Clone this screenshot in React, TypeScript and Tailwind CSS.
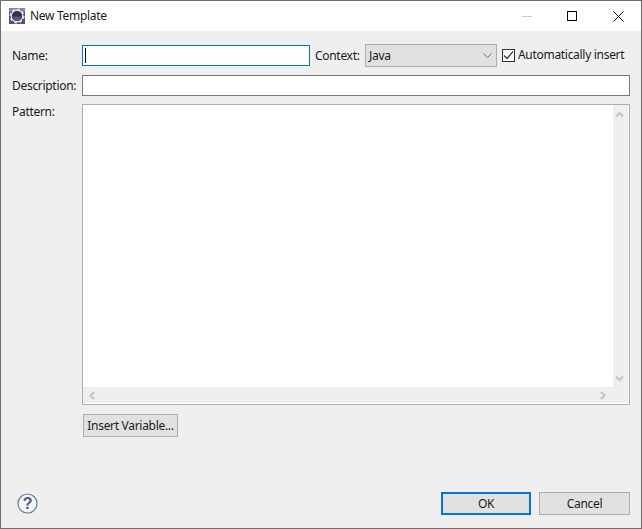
const ff = "font-['Noto_Sans','Open_Sans',sans-serif]";

function AppIcon() {
  return (
    <svg width="16" height="16" viewBox="0 0 16 16">
      <rect x="0" y="0" width="16" height="16" fill="#5a4888" />
      <rect x="0" y="0" width="16" height="4" fill="#8d80ad" />
      <circle cx="8" cy="8" r="6.6" fill="none" stroke="#dcdce4" strokeWidth="1.8" strokeDasharray="2.6 2.6" />
      <circle cx="8" cy="8" r="5.7" fill="none" stroke="#e4e4ea" strokeWidth="1.4" />
      <circle cx="8" cy="8" r="5" fill="#37324c" />
      <path d="M3.4 8.5h9.2a4.6 4.6 0 0 1-9.2 0z" fill="#5d5873" />
    </svg>
  );
}

function Chevron({ d }: { d: string }) {
  return (
    <svg width="9" height="9" viewBox="0 0 9 9">
      <path d={d} fill="none" stroke="#c4c4c4" strokeWidth="2" />
    </svg>
  );
}

export default function App() {
  return (
    <div className={`${ff} w-[642px] h-[529px] bg-[#efefef] border border-[#6e6e6e] flex flex-col text-[12px] leading-[16px] tracking-[-0.3px] text-[#1a1a1a] overflow-hidden`}>
      <div className="h-[30px] bg-white flex items-center shrink-0">
        <div className="ml-[8px] flex items-center">
          <AppIcon />
        </div>
        <span className="ml-[5px] text-[#1a1a1a]">New Template</span>
        <div className="ml-auto flex items-center">
          <div className="w-[46px] h-[30px] flex items-center justify-center">
            <div className="w-[10px] h-px bg-[#c8c8c8] ml-[2px]" />
          </div>
          <div className="w-[46px] h-[30px] flex items-center justify-center">
            <div className="w-[10px] h-[10px] border border-black" />
          </div>
          <div className="w-[46px] h-[30px] flex items-center justify-center">
            <svg width="11" height="11" viewBox="0 0 11 11">
              <path d="M0.5 0.5L10.5 10.5M10.5 0.5L0.5 10.5" stroke="#111" strokeWidth="1" fill="none" />
            </svg>
          </div>
        </div>
      </div>

      <div className="flex-1 flex flex-col pl-[11px] pr-[11px]">
        <div className="flex items-center mt-[13px] h-[23px]">
          <span className="w-[70px]">Name:</span>
          <div className="w-[228px] h-[21px] bg-white border border-[#0078d7] flex items-center pl-[2px]">
            <div className="w-px h-[15px] bg-black" />
          </div>
          <span className="ml-[5px] w-[50px]">Context:</span>
          <div className="w-[132px] h-[23px] bg-[#e1e1e1] border border-[#adadad] flex items-center justify-between pl-[3px] pr-[4px]">
            <span>Java</span>
            <svg width="9" height="6" viewBox="0 0 9 6">
              <path d="M0.5 0.5L4.5 4.5L8.5 0.5" fill="none" stroke="#707070" strokeWidth="1" />
            </svg>
          </div>
          <div className="ml-[5px] w-[13px] h-[13px] bg-white border border-[#333] flex items-center justify-center">
            <svg width="11" height="11" viewBox="0 0 11 11">
              <path d="M1 5.5L4 8.5L10 1.5" fill="none" stroke="#333" strokeWidth="1.2" />
            </svg>
          </div>
          <span className="ml-[3px] pb-[2px] whitespace-nowrap">Automatically insert</span>
        </div>

        <div className="flex items-center mt-[8px] h-[21px]">
          <span className="w-[70px] whitespace-nowrap">Description:</span>
          <div className="w-[548px] h-[21px] bg-white border border-[#7a7a7a]" />
        </div>

        <div className="flex mt-[8px]">
          <span className="w-[70px]">Pattern:</span>
          <div className="w-[548px] h-[301px] border border-[#adadad] bg-[#efefef] flex flex-col">
            <div className="flex-1 flex min-h-0">
              <div className="flex-1 bg-white" />
              <div className="w-[16px] border-r border-white flex flex-col items-center justify-between pt-[5px] pb-[4px] pr-[2px]">
                <Chevron d="M1 6.5L4.5 3L8 6.5" />
                <Chevron d="M1 2.5L4.5 6L8 2.5" />
              </div>
            </div>
            <div className="h-[17px] border-b border-white flex">
              <div className="flex-1 flex items-center justify-between pl-[5px] pr-[6px]">
                <Chevron d="M6 1L2.5 4.5L6 8" />
                <Chevron d="M3 1L6.5 4.5L3 8" />
              </div>
              <div className="w-[16px] border-r border-white" />
            </div>
          </div>
        </div>

        <div className="ml-[71px] mt-[9px] w-[95px] h-[23px] bg-[#e1e1e1] border border-[#adadad] flex items-center justify-center whitespace-nowrap">
          Insert Variable...
        </div>

        <div className="mt-auto mb-[13px] flex items-center">
          <div className="ml-[5px] flex">
            <svg width="21" height="21" viewBox="0 0 21 21">
              <circle cx="10.5" cy="10.5" r="9.5" fill="#f4f5f8" stroke="#6a7d99" strokeWidth="1.2" />
              <text x="10.5" y="16" textAnchor="middle" fontSize="16" fontWeight="700" fill="#465c7e" fontFamily="Liberation Sans, sans-serif">?</text>
            </svg>
          </div>
          <div className="ml-auto w-[90px] h-[23px] bg-[#e1e1e1] border-2 border-[#0078d7] flex items-center justify-center">OK</div>
          <div className="ml-[8px] w-[91px] h-[23px] bg-[#e1e1e1] border border-[#adadad] flex items-center justify-center">Cancel</div>
        </div>
      </div>
    </div>
  );
}
